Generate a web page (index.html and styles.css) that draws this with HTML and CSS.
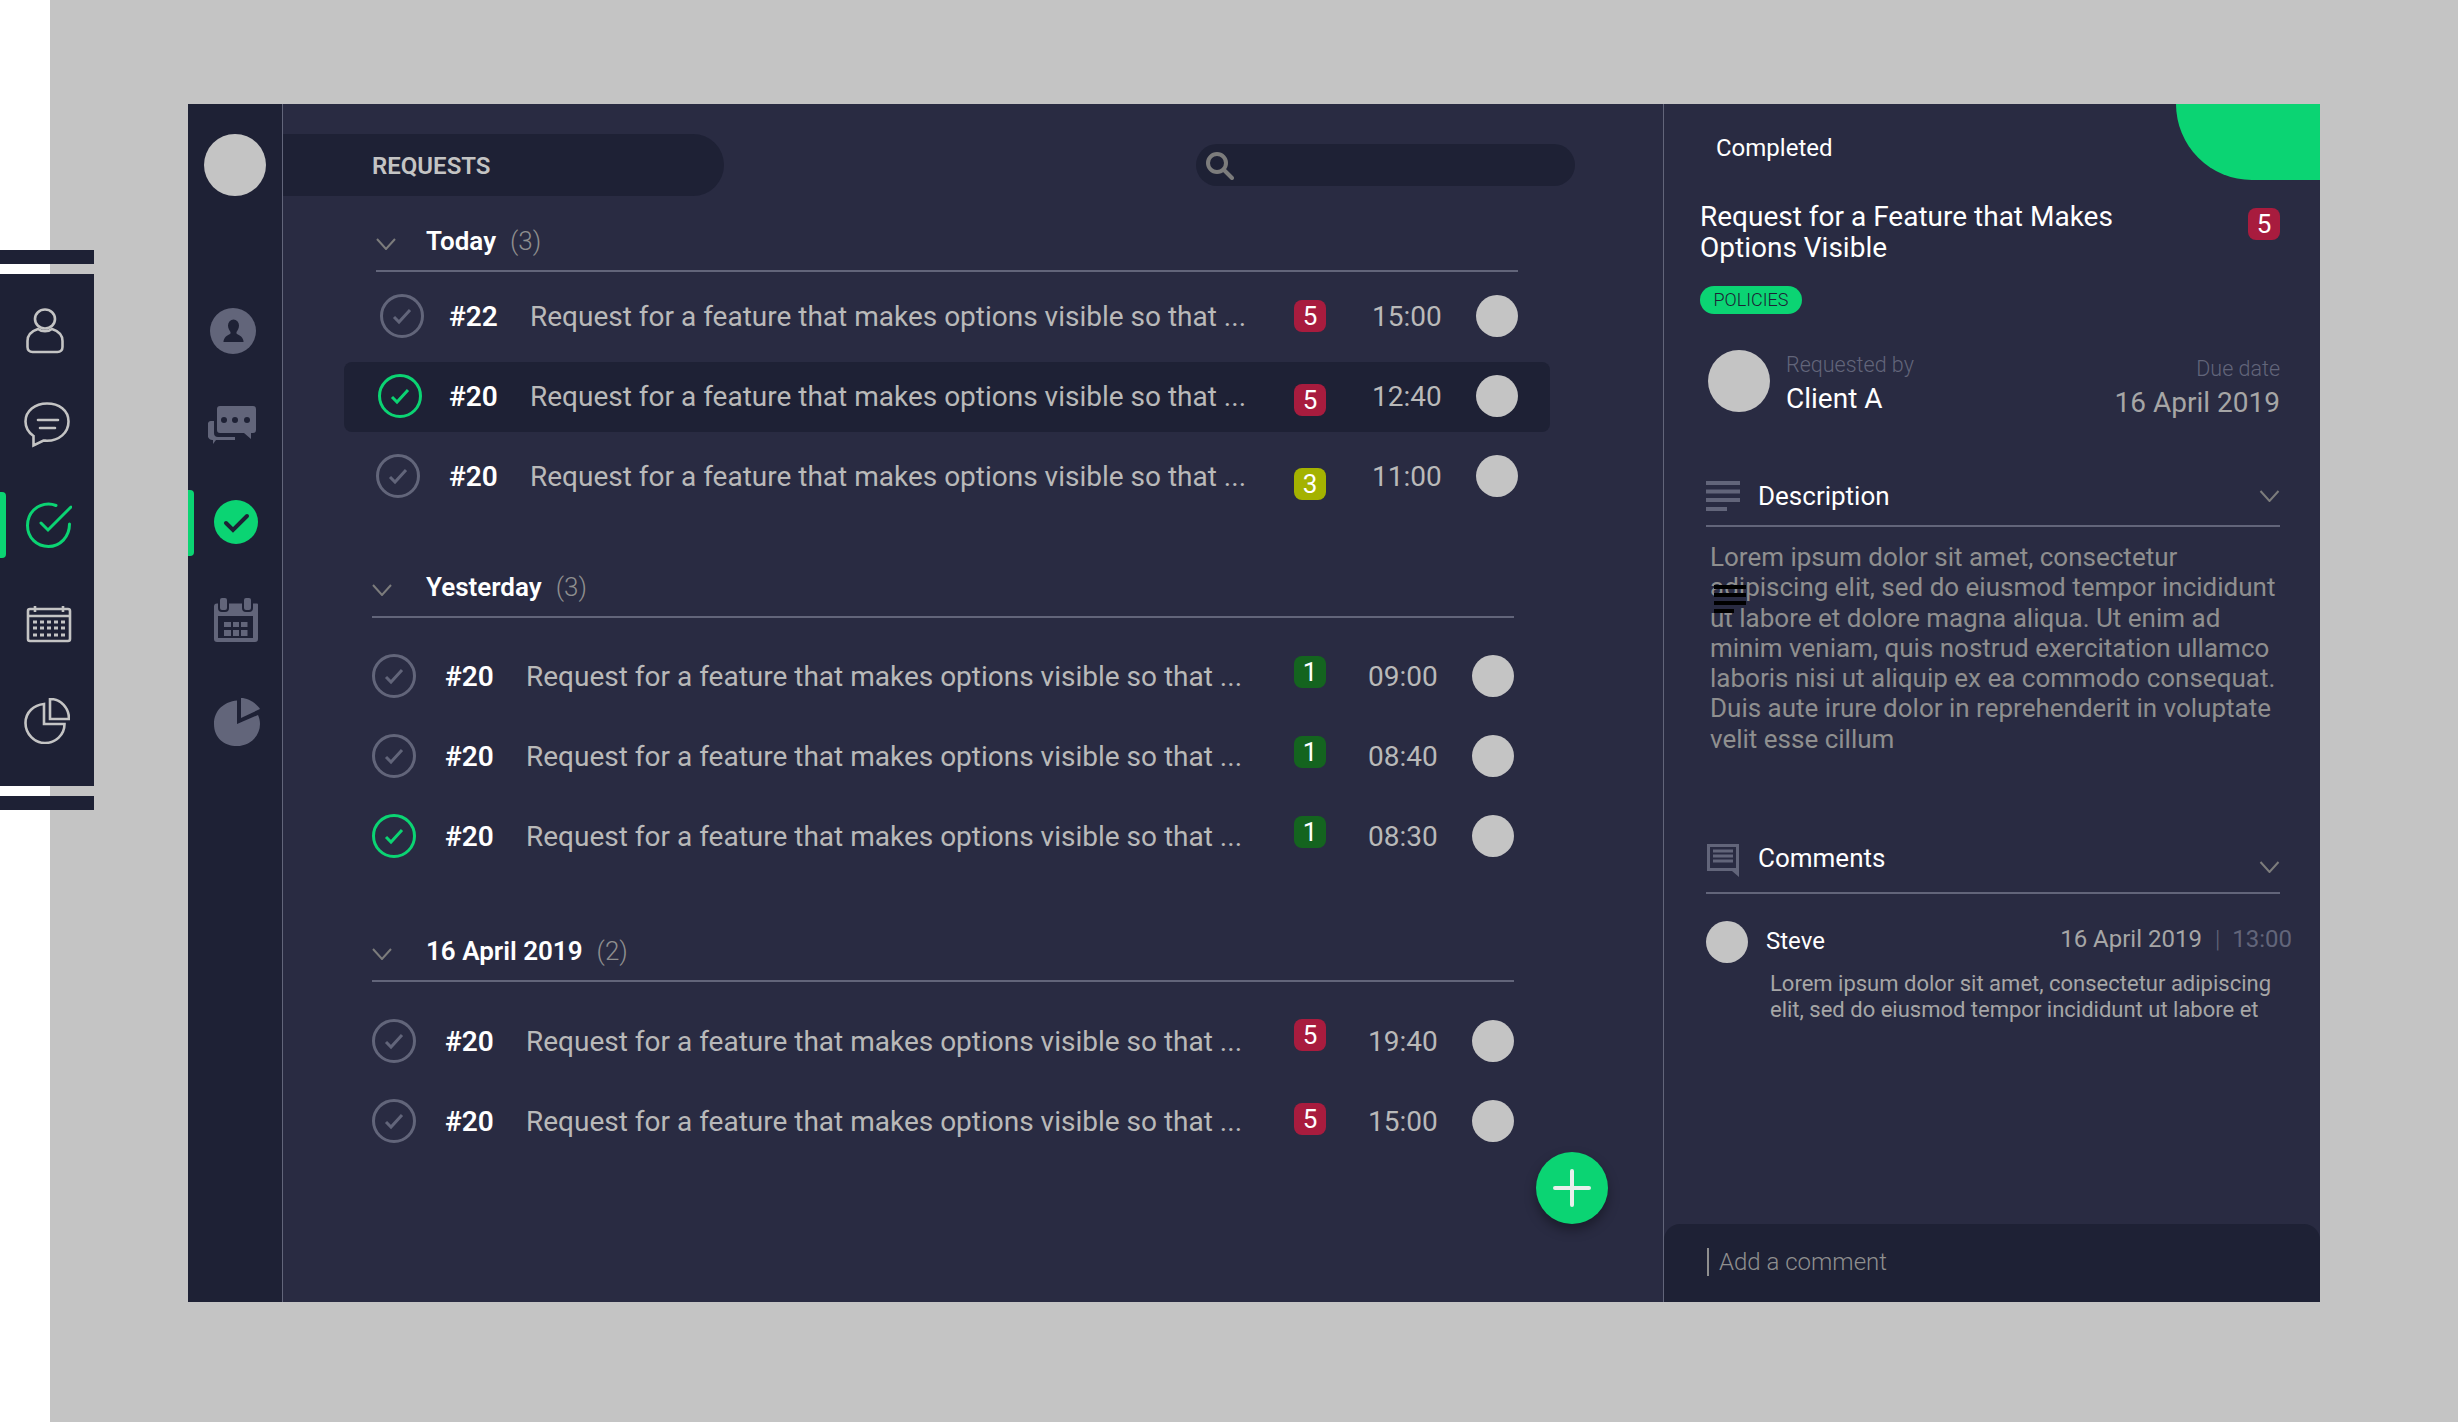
FILE: index.html
```html
<!DOCTYPE html>
<html lang="en">
<head>
    <meta charset="UTF-8">
    <title>Requests</title>
    <link rel="stylesheet" href="styles.css">
</head>
<body>
    <div class="strip">
        <div class="strip-cap"></div>
        <nav class="strip-nav">
            <span class="strip-item">
                <svg width="38" height="46" viewBox="0 0 38 46" fill="none" stroke="#c4c4c4" stroke-width="2.600"><ellipse cx="19" cy="11" rx="10" ry="9.500"/><path d="M12 21C6 23 1.500 27 1.500 33v6c0 3 2 5 5 5h25c3 0 5-2 5-5v-6c0-6-4.500-10-10.500-12-4 3-10 3-14 0z"/></svg>
            </span>
            <span class="strip-item">
                <svg width="46" height="46" viewBox="0 0 46 46" fill="none" stroke="#c4c4c4" stroke-width="2.600" stroke-linecap="round"><path d="M23 1.500C11 1.500 1.500 9 1.500 19.500c0 6 3 11 8 14.500v9.500l10-5c1 0 2.500 .3 3.500 .3 12 0 21.500-8 21.500-19.300S35 1.500 23 1.500z"/><path d="M14 18h20M16 26h15"/></svg>
            </span>
            <span class="strip-item strip-item-on">
                <svg width="46" height="46" viewBox="0 0 46 46" fill="none" stroke="#0bd473" stroke-width="3" stroke-linecap="round"><path d="M30 3.500C27.500 2.500 25 2 22.500 2 11 2 1.500 11 1.500 23.500S11 44.500 22.500 44.500 43.500 35 43.500 22"/><path d="M15 21l7 7L45 5"/></svg>
            </span>
            <span class="strip-item">
                <svg width="46" height="38" viewBox="0 0 46 38" fill="none" stroke="#c4c4c4" stroke-width="2.600"><rect x="2" y="4" width="42" height="32" rx="2"/><path d="M2 11h42M9 1v6M37 1v6"/><path d="M7 17h32M7 23h32M7 30h32" stroke-width="3" stroke-dasharray="4 3"/></svg>
            </span>
            <span class="strip-item">
                <svg width="46" height="46" viewBox="0 0 46 46" fill="none" stroke="#c4c4c4" stroke-width="2.600"><path d="M20 6C10 7 1.500 14 1.500 25c0 11 9 20 19.500 20s19.500-8 19.500-19H20z"/><path d="M26 1v20h19C45 10 37 1 26 1z"/></svg>
            </span>
        </nav>
        <div class="strip-cap"></div>
    </div>

    <main class="frame">
        <aside class="rail">
            <span class="dot rail-avatar"></span>
            <span class="rail-item">
                <svg width="46" height="46" viewBox="0 0 46 46"><circle cx="23" cy="23" r="23" fill="#62657a"/><path d="M23.500 11.500a5.500 6 0 0 1 5.500 6c0 3-1.500 5-2.500 6.500v1.500c1 1.500 6 2 7 7.500v1H13.500v-1c1-5.500 6-6 7-7.500V24c-1-1.500-2.500-3.500-2.500-6.500a5.500 6 0 0 1 5.500-6z" fill="#1e2135"/></svg>
            </span>
            <span class="rail-item">
                <svg width="48" height="38" viewBox="0 0 48 38" fill="#62657a"><path d="M9 3a3 3 0 0 1 3-3h33a3 3 0 0 1 3 3v21a3 3 0 0 1-3 3h-2v6l-7-6H12a3 3 0 0 1-3-3z"/><path d="M6 15v12a4 4 0 0 0 4 4h17v3H8l-3 4v-4a5 5 0 0 1-5-3V17a3 3 0 0 1 3-2z"/><g fill="#1e2135"><circle cx="16" cy="14" r="3"/><circle cx="27" cy="14" r="3"/><circle cx="39" cy="14" r="3"/></g></svg>
            </span>
            <span class="rail-item rail-item-on">
                <svg width="44" height="44" viewBox="0 0 44 44"><circle cx="22" cy="22" r="22" fill="#0bd473"/><path d="M12 23l7 7 14-14" fill="none" stroke="#1e2135" stroke-width="4" stroke-linecap="round"/></svg>
            </span>
            <span class="rail-item">
                <svg width="44" height="44" viewBox="0 0 44 44" fill="#62657a"><path d="M3 5.500h40a1 1 0 0 1 1 1V41a3 3 0 0 1-3 3H3a3 3 0 0 1-3-3V8.500a3 3 0 0 1 3-3z"/><g fill="#62657a" stroke="#1e2135" stroke-width="2"><rect x="5" y="-1" width="9" height="14" rx="3"/><rect x="29" y="-1" width="9" height="14" rx="3"/></g><rect x="4" y="18" width="35" height="22" fill="#1e2135"/><rect x="10" y="24" width="7" height="5"/><rect x="19" y="24" width="6" height="5"/><rect x="27" y="24" width="6.500" height="5"/><rect x="10" y="32" width="7" height="6"/><rect x="19" y="32" width="6" height="6"/><rect x="27" y="32" width="6.500" height="6"/></svg>
            </span>
            <span class="rail-item">
                <svg width="46" height="48" viewBox="0 0 46 48" fill="#62657a"><path d="M23 2.500C10 4 0 12 0 26s10 22 23 22 23-10 23-22c0-3-.6-6-2-9L23 26z"/><path d="M27 0c7 0 15 5 19 11L27 20z"/></svg>
            </span>
        </aside>

        <section class="requests">
            <header class="requests-bar">
                <div class="requests-tab">REQUESTS</div>
                <div class="search">
                    <svg width="28" height="28" viewBox="0 0 28 28" fill="none" stroke="#7c7c7c" stroke-width="4" stroke-linecap="round"><circle cx="11" cy="11" r="9"/><path d="M18 18l8 8"/></svg>
                </div>
            </header>

            <div class="group group-today">
                <div class="group-head">
                    <svg class="chev" width="20" height="12" viewBox="0 0 20 12" fill="none" stroke="#7c7c7c" stroke-width="2"><path d="M1 1l9 10 9-10"/></svg>
                    <b>Today</b><span class="count">(3)</span>
                </div>
                <div class="row">
                    <span class="check-cell"><span class="check inset-4"><svg width="20" height="18" viewBox="0 0 20 18"><path d="M2 10l5 5L18 3"/></svg></span></span>
                    <b class="num">#22</b><span class="title">Request for a feature that makes options visible so that ...</span>
                    <span class="badge red">5</span><span class="time">15:00</span><span class="dot person"></span>
                </div>
                <div class="row row-on">
                    <span class="check-cell"><span class="check check-done inset-2"><svg width="20" height="18" viewBox="0 0 20 18"><path d="M2 10l5 5L18 3"/></svg></span></span>
                    <b class="num">#20</b><span class="title">Request for a feature that makes options visible so that ...</span>
                    <span class="badge red low-4">5</span><span class="time">12:40</span><span class="dot person"></span>
                </div>
                <div class="row">
                    <span class="check-cell"><span class="check"><svg width="20" height="18" viewBox="0 0 20 18"><path d="M2 10l5 5L18 3"/></svg></span></span>
                    <b class="num">#20</b><span class="title">Request for a feature that makes options visible so that ...</span>
                    <span class="badge olive low-8">3</span><span class="time">11:00</span><span class="dot person"></span>
                </div>
            </div>

            <div class="group group-yesterday">
                <div class="group-head">
                    <svg class="chev" width="20" height="12" viewBox="0 0 20 12" fill="none" stroke="#7c7c7c" stroke-width="2"><path d="M1 1l9 10 9-10"/></svg>
                    <b>Yesterday</b><span class="count">(3)</span>
                </div>
                <div class="row">
                    <span class="check-cell"><span class="check"><svg width="20" height="18" viewBox="0 0 20 18"><path d="M2 10l5 5L18 3"/></svg></span></span>
                    <b class="num">#20</b><span class="title">Request for a feature that makes options visible so that ...</span>
                    <span class="badge green high-4">1</span><span class="time">09:00</span><span class="dot person"></span>
                </div>
                <div class="row">
                    <span class="check-cell"><span class="check"><svg width="20" height="18" viewBox="0 0 20 18"><path d="M2 10l5 5L18 3"/></svg></span></span>
                    <b class="num">#20</b><span class="title">Request for a feature that makes options visible so that ...</span>
                    <span class="badge green high-4">1</span><span class="time">08:40</span><span class="dot person"></span>
                </div>
                <div class="row">
                    <span class="check-cell"><span class="check check-done"><svg width="20" height="18" viewBox="0 0 20 18"><path d="M2 10l5 5L18 3"/></svg></span></span>
                    <b class="num">#20</b><span class="title">Request for a feature that makes options visible so that ...</span>
                    <span class="badge green high-4">1</span><span class="time">08:30</span><span class="dot person"></span>
                </div>
            </div>

            <div class="group group-april">
                <div class="group-head">
                    <svg class="chev" width="20" height="12" viewBox="0 0 20 12" fill="none" stroke="#7c7c7c" stroke-width="2"><path d="M1 1l9 10 9-10"/></svg>
                    <b>16 April 2019</b><span class="count">(2)</span>
                </div>
                <div class="row">
                    <span class="check-cell"><span class="check"><svg width="20" height="18" viewBox="0 0 20 18"><path d="M2 10l5 5L18 3"/></svg></span></span>
                    <b class="num">#20</b><span class="title">Request for a feature that makes options visible so that ...</span>
                    <span class="badge red high-6">5</span><span class="time">19:40</span><span class="dot person"></span>
                </div>
                <div class="row">
                    <span class="check-cell"><span class="check"><svg width="20" height="18" viewBox="0 0 20 18"><path d="M2 10l5 5L18 3"/></svg></span></span>
                    <b class="num">#20</b><span class="title">Request for a feature that makes options visible so that ...</span>
                    <span class="badge red high-2">5</span><span class="time">15:00</span><span class="dot person"></span>
                </div>
            </div>

            <button class="fab">
                <svg width="38" height="38" viewBox="0 0 38 38" stroke="#e9efec" stroke-width="4" stroke-linecap="round"><path d="M19 2v34M2 19h34"/></svg>
            </button>
        </section>

        <section class="detail">
            <div class="detail-top">
                <span class="status">Completed</span>
                <span class="corner"></span>
            </div>
            <div class="detail-title">
                <h1>Request for a Feature that Makes<br>Options Visible</h1>
                <span class="badge red">5</span>
            </div>
            <span class="tag">POLICIES</span>
            <div class="meta">
                <span class="dot meta-avatar"></span>
                <div class="meta-who">
                    <span class="meta-label">Requested by</span>
                    <span class="meta-name">Client A</span>
                </div>
                <div class="meta-due">
                    <span class="meta-label">Due date</span>
                    <span class="meta-date">16 April 2019</span>
                </div>
            </div>

            <div class="sec-head">
                <svg width="34" height="30" viewBox="0 0 34 30" fill="#62657a"><rect width="34" height="4"/><rect y="8.500" width="34" height="4"/><rect y="17" width="34" height="4"/><rect y="26" width="21" height="4"/></svg>
                <span>Description</span>
                <svg class="chev-end" width="21" height="12" viewBox="0 0 20 12" fill="none" stroke="#7c7c7c" stroke-width="2"><path d="M1 1l9 10 9-10"/></svg>
            </div>
            <div class="desc">
                <p>Lorem ipsum dolor sit amet, consectetur adipiscing elit, sed do eiusmod tempor incididunt ut labore et dolore magna aliqua. Ut enim ad minim veniam, quis nostrud exercitation ullamco laboris nisi ut aliquip ex ea commodo consequat. Duis aute irure dolor in reprehenderit in voluptate velit esse cillum</p>
                <svg class="stray" width="32" height="28" viewBox="0 0 32 28" fill="#000"><rect width="32" height="4"/><rect y="8" width="32" height="4"/><rect y="16" width="32" height="4"/><rect y="24" width="20" height="4"/></svg>
            </div>

            <div class="sec-head sec-comments">
                <svg width="34" height="34" viewBox="0 0 34 34"><path d="M1 1h32v33l-7-6H1z" fill="#62657a"/><path d="M4 4h26v21H4z" fill="#292b42"/><path d="M7 8h20M7 13h20M7 18h20" stroke="#62657a" stroke-width="3"/></svg>
                <span>Comments</span>
                <svg class="chev-end" width="21" height="12" viewBox="0 0 20 12" fill="none" stroke="#7c7c7c" stroke-width="2"><path d="M1 1l9 10 9-10"/></svg>
            </div>
            <div class="comment">
                <div class="comment-head">
                    <span class="dot person"></span>
                    <span class="comment-name">Steve</span>
                    <span class="comment-date">16 April 2019</span>
                    <span class="comment-sep">|</span>
                    <span class="comment-time">13:00</span>
                </div>
                <p>Lorem ipsum dolor sit amet, consectetur adipiscing elit, sed do eiusmod tempor incididunt ut labore et</p>
            </div>

            <div class="add-comment"><span class="caret"></span>Add a comment</div>
        </section>
    </main>
</body>
</html>
```

FILE: styles.css
```css
* { box-sizing: border-box; }
body {
    margin: 0;
    height: 1422px;
    overflow: hidden;
    display: flex;
    align-items: flex-start;
    background: linear-gradient(to right, #fff 50px, #c4c4c4 50px);
    font-family: Roboto, "Liberation Sans", sans-serif;
    color: #c4c4c4;
}
b { font-weight: 600; }
p, h1 { margin: 0; }
.dot { display: block; flex: none; border-radius: 50%; background: #c4c4c4; }

/* left icon strip */
.strip { width: 94px; margin-top: 250px; }
.strip-cap { height: 14px; background: #1e2135; }
.strip-nav {
    height: 512px;
    margin: 10px 0;
    background: #1e2135;
    padding-top: 34px;
    display: flex;
    flex-direction: column;
    align-items: flex-start;
}
.strip-item { position: relative; display: block; height: 46px; margin-left: 26px; margin-bottom: 48px; }
.strip-item:nth-child(2) { margin-left: 24px; margin-bottom: 54px; }
.strip-item:nth-child(3) { margin-bottom: 57px; }
.strip-item:nth-child(4) { height: 38px; margin-bottom: 55px; }
.strip-item:nth-child(5) { margin-left: 24px; }
.strip-item svg { display: block; }
.strip-item-on::before {
    content: "";
    position: absolute;
    left: -26px;
    top: -10px;
    width: 6px;
    height: 66px;
    background: #0bd473;
    border-radius: 0 4px 4px 0;
}

/* frame */
.frame {
    width: 2132px;
    height: 1198px;
    margin: 104px 0 0 94px;
    display: flex;
    background: #292b42;
    position: relative;
}
.rail {
    width: 95px;
    flex: none;
    background: #1e2135;
    border-right: 1px solid #62657a;
    padding-top: 30px;
    display: flex;
    flex-direction: column;
}
.rail-avatar { width: 62px; height: 62px; margin-left: 16px; margin-bottom: 112px; }
.rail-item { position: relative; display: block; height: 46px; margin-left: 22px; margin-bottom: 52px; }
.rail-item svg { display: block; }
.rail-item:nth-child(3) { margin-left: 20px; height: 38px; margin-bottom: 56px; }
.rail-item:nth-child(4) { margin-left: 26px; height: 44px; margin-bottom: 54px; }
.rail-item:nth-child(5) { margin-left: 26px; height: 44px; margin-bottom: 56px; }
.rail-item:nth-child(6) { margin-left: 26px; }
.rail-item-on::before {
    content: "";
    position: absolute;
    left: -26px;
    top: -10px;
    width: 6px;
    height: 66px;
    background: #0bd473;
    border-radius: 0 4px 4px 0;
}

/* requests list */
.requests { width: 1381px; flex: none; position: relative; border-right: 1px solid #62657a; }
.requests-bar { display: flex; padding-top: 30px; height: 92px; }
.requests-tab {
    width: 441px;
    height: 62px;
    background: #1e2135;
    border-radius: 0 31px 31px 0;
    padding-left: 89px;
    line-height: 64px;
    font-size: 24px;
    font-weight: 600;
    color: #c4c4c4;
}
.search {
    width: 379px;
    height: 42px;
    margin: 10px 0 0 472px;
    background: #1e2135;
    border-radius: 21px;
    padding: 8px 0 0 10px;
}
.search svg { display: block; }
.group { margin-left: 89px; width: 1142px; }
.group-today { margin-left: 93px; margin-top: 26px; }
.group-yesterday { margin-top: 52px; }
.group-april { margin-top: 56px; }
.group-head {
    height: 50px;
    display: flex;
    align-items: center;
    border-bottom: 2px solid #62657a;
    font-size: 26px;
    color: #fff;
    padding-bottom: 10px;
    margin-bottom: 18px;
}
.group-today .group-head { margin-bottom: 4px; }
.group-april .group-head { margin-bottom: 19px; }
.chev { margin: 5px 34px 0 0; flex: none; }
.group-today .chev { margin-right: 30px; }
.count { margin-left: 14px; color: #8f8f8f; font-weight: 300; }
.row {
    position: relative;
    height: 80px;
    display: flex;
    align-items: center;
    font-size: 28px;
}
.check-cell { flex: none; width: 73px; }
.check {
    width: 44px;
    height: 44px;
    border: 3.500px solid #62657a;
    border-radius: 50%;
    display: flex;
    align-items: center;
    justify-content: center;
}
.inset-4 { margin-left: 4px; }
.inset-2 { margin-left: 2px; }
.check path { fill: none; stroke: #62657a; stroke-width: 3; }
.check-done { border-color: #0bd473; }
.check-done path { stroke: #0bd473; }
.num { width: 81px; color: #fff; flex: none; }
.title { width: 768px; flex: none; white-space: nowrap; color: #b9b9b9; }
.group-today .title { width: 764px; }
.badge {
    flex: none;
    width: 32px;
    height: 32px;
    border-radius: 8px;
    text-align: center;
    line-height: 33px;
    font-size: 26px;
    color: #fff;
}
.red { background: #a81c3e; }
.olive { background: #a4b200; }
.green { background: #14641f; }
.low-4 { margin-top: 8px; }
.low-8 { margin-top: 16px; }
.high-2 { margin-bottom: 4px; }
.high-4 { margin-bottom: 8px; }
.high-6 { margin-bottom: 12px; }
.time { width: 68px; margin-left: 42px; flex: none; color: #b9b9b9; white-space: nowrap; }
.group-today .time { margin-left: 46px; }
.person { width: 42px; height: 42px; margin-left: 36px; }
.row-on::before {
    content: "";
    position: absolute;
    left: -32px;
    right: -32px;
    top: 6px;
    height: 70px;
    background: #1e2135;
    border-radius: 8px;
}
.row-on > * { position: relative; }
.fab {
    position: absolute;
    left: 1253px;
    top: 1048px;
    width: 72px;
    height: 72px;
    padding: 0;
    border: 0;
    border-radius: 50%;
    background: #0bd473;
    box-shadow: 0 6px 12px rgba(0, 0, 0, .35);
    display: flex;
    align-items: center;
    justify-content: center;
}

/* detail panel */
.detail { position: relative; flex: 1; padding: 0 40px 0 36px; }
.detail-top { height: 76px; display: flex; }
.status { margin: 28px 0 0 16px; font-size: 24px; line-height: 32px; color: #fff; }
.corner {
    position: absolute;
    right: 0;
    top: 0;
    width: 144px;
    height: 76px;
    background: #0bd473;
    border-radius: 0 0 0 76px;
}
.detail-title { display: flex; justify-content: space-between; margin-top: 21px; }
.detail-title h1 { font-size: 28px; line-height: 31px; font-weight: 400; color: #fff; white-space: nowrap; }
.detail-title .badge { margin-top: 7px; }
.tag {
    display: block;
    width: 102px;
    height: 28px;
    margin-top: 23px;
    background: #0bd473;
    border-radius: 14px;
    text-align: center;
    line-height: 28px;
    font-size: 18px;
    color: #1e2135;
    font-weight: 300;
}
.meta { display: flex; margin: 36px 0 0 8px; }
.meta-avatar { width: 62px; height: 62px; }
.meta-who { margin-left: 16px; display: flex; flex-direction: column; }
.meta-due { margin-left: auto; display: flex; flex-direction: column; align-items: flex-end; padding-top: 4px; }
.meta-label { font-size: 21.500px; line-height: 30px; color: #62657a; font-weight: 300; }
.meta-name { font-size: 28px; line-height: 38px; color: #fff; }
.meta-date { font-size: 28px; line-height: 38px; color: #a6a6a6; }
.sec-head {
    position: relative;
    display: flex;
    align-items: center;
    margin: 55px 0 0 6px;
    height: 50px;
    padding-bottom: 10px;
    border-bottom: 2px solid #62657a;
    font-size: 26px;
    color: #fff;
}
.sec-head span { margin-left: 18px; }
.chev-end { margin-left: auto; }
.desc { position: relative; margin: 15px 0 0 10px; }
.desc p { font-size: 26px; line-height: 30.300px; color: #8f8f8f; }
.stray { position: absolute; left: 4px; top: 43px; }
.sec-comments { margin-top: 90px; padding-bottom: 20px; }
.sec-comments > svg { margin-top: 4px; }
.sec-comments .chev-end { margin-top: 18px; }
.comment { margin: 27px 0 0 6px; }
.comment-head { display: flex; align-items: center; font-size: 24px; }
.comment-head .person { margin-left: 0; }
.comment-name { margin: 0 0 2px 18px; color: #fff; }
.comment-date { margin-left: auto; color: #a6a6a6; margin-bottom: 6px; }
.comment-sep { margin-left: 13px; color: #62657a; margin-bottom: 6px; font-weight: 300; }
.comment-time { margin: 0 -12px 6px 12px; color: #62657a; }
.comment p { margin: 8px 0 0 64px; font-size: 22px; line-height: 26px; color: #a6a6a6; }
.add-comment {
    position: absolute;
    left: 0;
    right: 0;
    bottom: 0;
    height: 78px;
    padding: 24px 0 0 43px;
    background: #1e2135;
    border-radius: 16px 16px 0 0;
    display: flex;
    font-size: 24px;
    line-height: 28px;
    color: #8f8f8f;
    font-weight: 300;
}
.caret { width: 2px; height: 28px; background: #8f8f8f; margin-right: 10px; }
```
